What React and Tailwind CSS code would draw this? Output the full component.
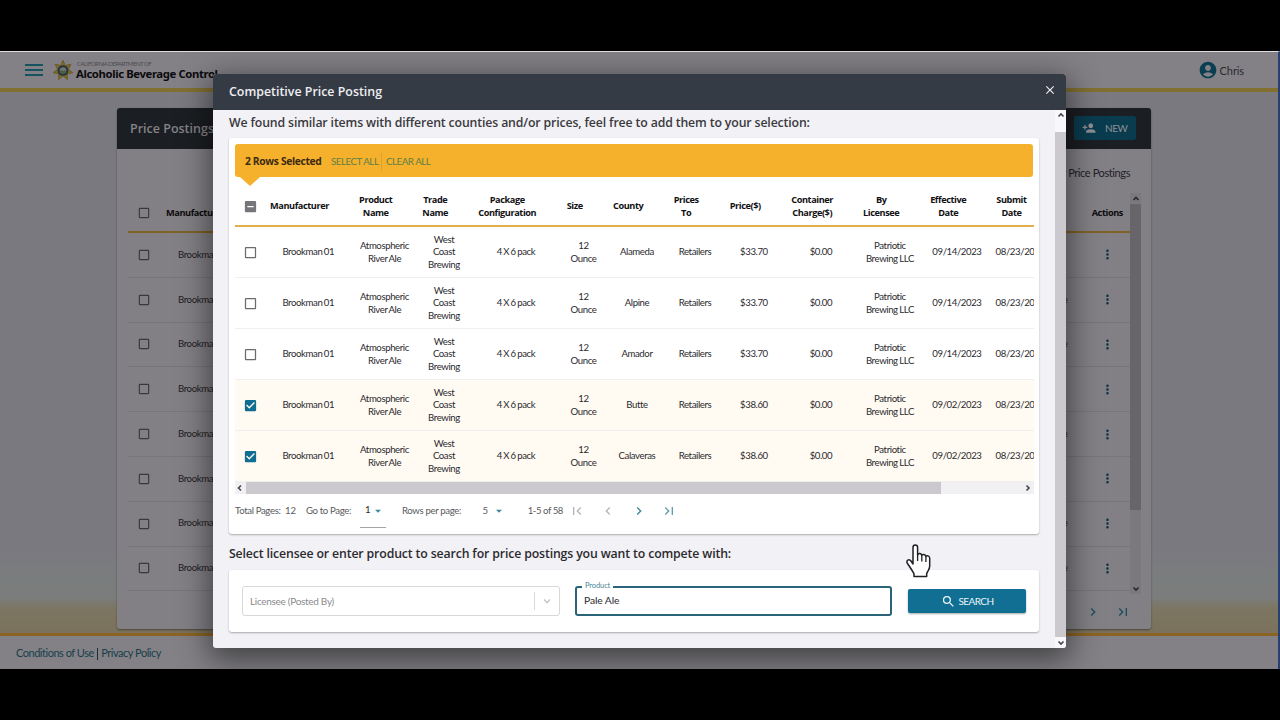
import { MdPersonAddAlt1, MdAccountCircle, MdMoreVert, MdSearch, MdClose, MdChevronLeft, MdChevronRight, MdFirstPage, MdLastPage, MdArrowDropDown, MdCheckBox, MdCheckBoxOutlineBlank, MdIndeterminateCheckBox } from 'react-icons/md';

const columns = [
  { key: 'manufacturer', lines: ['Manufacturer'] },
  { key: 'product', lines: ['Product', 'Name'] },
  { key: 'trade', lines: ['Trade', 'Name'] },
  { key: 'pack', lines: ['Package', 'Configuration'] },
  { key: 'size', lines: ['Size'] },
  { key: 'county', lines: ['County'] },
  { key: 'pricesTo', lines: ['Prices', 'To'] },
  { key: 'price', lines: ['Price($)'] },
  { key: 'container', lines: ['Container', 'Charge($)'] },
  { key: 'licensee', lines: ['By', 'Licensee'] },
  { key: 'effective', lines: ['Effective', 'Date'] },
  { key: 'submit', lines: ['Submit', 'Date'] },
];

const makeRow = (county, price, effective, selected) => ({
  selected,
  manufacturer: ['Brookman 01'],
  product: ['Atmospheric', 'River Ale'],
  trade: ['West', 'Coast', 'Brewing'],
  pack: ['4 X 6 pack'],
  size: ['12', 'Ounce'],
  county: [county],
  pricesTo: ['Retailers'],
  price: [price],
  container: ['$0.00'],
  licensee: ['Patriotic', 'Brewing LLC'],
  effective: [effective],
  submit: ['08/23/2023'],
});

const rows = [
  makeRow('Alameda', '$33.70', '09/14/2023', false),
  makeRow('Alpine', '$33.70', '09/14/2023', false),
  makeRow('Amador', '$33.70', '09/14/2023', false),
  makeRow('Butte', '$38.60', '09/02/2023', true),
  makeRow('Calaveras', '$38.60', '09/02/2023', true),
];

const postingStatuses = ['', 'Active', 'Active', '', 'Active', '', 'Active', 'Active'];

const gridCols =
  'grid w-[817px] grid-cols-[31px_84.6px_67.8px_51.2px_92.8px_42.2px_64.8px_51.2px_66.8px_67.2px_70.8px_63.2px_63.4px]';

function Lines({ lines }) {
  return lines.map((line) => (
    <div key={line} className="whitespace-nowrap">
      {line}
    </div>
  ));
}

function Arrow({ d, className }) {
  return (
    <svg viewBox="0 0 8 8" className={className} fill="none" stroke="currentColor" strokeWidth="1.6">
      <path d={d} />
    </svg>
  );
}

function Badge() {
  return (
    <svg viewBox="-12 -12 24 24" className="ml-[9px] h-[23px] w-[22px]">
      <path
        d="M0-11L2.600-5.400 8.600-6.900 5.850-1.300 10.700 2.400 4.700 3.750 4.800 9.900 0 6 -4.800 9.900 -4.700 3.750 -10.700 2.400 -5.850-1.300 -8.600-6.900 -2.600-5.400z"
        fill="#7d6a2b"
        stroke="#6a5925"
        strokeWidth="1"
        strokeLinejoin="round"
      />
      <circle r="6" fill="#22343b" stroke="#6f6133" strokeWidth="0.6" />
      <circle r="3.6" fill="#6f767a" />
      <path d="M-3.400 1l2-1.600L.4.8 2-.2l1.400 1.400A3.600 3.600 0 01-3.400 1z" fill="#4d5c3c" />
    </svg>
  );
}

function Header() {
  return (
    <header className="flex h-[40px] shrink-0 items-center border-b-4 border-[#817032] bg-[#838186] shadow-[0_1px_4px_rgba(0,0,0,0.35)]">
      <div className="ml-[25px] flex w-[18px] flex-col gap-[3px]">
        <span className="h-[1.8px] bg-[#14535f]" />
        <span className="h-[1.8px] bg-[#14535f]" />
        <span className="h-[1.8px] bg-[#14535f]" />
      </div>
      <Badge />
      <div className="ml-[2px] whitespace-nowrap">
        <div className="pl-[1px] text-[6px] leading-[7px] tracking-[-0.48px] text-[#4e4c50]">CALIFORNIA DEPARTMENT OF</div>
        <div className="font-['Noto_Sans',sans-serif] text-[11.3px] font-bold leading-[14px] tracking-[-0.38px] text-[#0b0b0d]">
          Alcoholic Beverage Control
        </div>
      </div>
      <div className="ml-auto mr-[34px] flex items-center gap-[2px]">
        <MdAccountCircle className="h-[20px] w-[20px] text-[#093f50]" />
        <span className="pt-[2px] text-[11px] leading-[14px] tracking-[-0.1px] text-[#2b2a2e]">Chris</span>
      </div>
    </header>
  );
}

function PostingsCard() {
  return (
    <section className="flex h-[521px] w-[1034px] flex-col rounded-[3px] bg-[#828085] shadow-[0_1px_2px_rgba(0,0,0,0.4)]">
      <div className="flex h-[41px] shrink-0 items-center justify-between rounded-t-[3px] bg-[#1b1e22] pl-[13px] pr-[15px]">
        <h1 className="pt-[1px] font-['Open_Sans',sans-serif] text-[12.5px] font-semibold text-[#858387]">Price Postings</h1>
        <button className="mb-[1px] flex h-[24px] w-[62px] items-center rounded-[2px] bg-[#0a3c4f] pl-[8px] text-[10px] text-[#8f9094]">
          <MdPersonAddAlt1 className="h-[14px] w-[14px] -scale-x-100" />
          <span className="ml-[9px] tracking-[-0.4px]">NEW</span>
        </button>
      </div>
      <div className="flex h-[44px] shrink-0 items-end justify-end pb-[11px] pr-[21px] text-[11px] leading-[18px] tracking-[-0.4px] text-[#232225]">
        My Price Postings
      </div>
      <div className="flex h-[401px] shrink-0 pl-[11px] pr-[10px]">
        <div className="flex-1">
          <div className="flex h-[40px] items-center border-b-2 border-[#806224] pt-[1px] font-['Open_Sans',sans-serif] text-[9.2px] font-bold tracking-[-0.4px] text-[#0c0b0e]">
            <MdCheckBoxOutlineBlank className="ml-[9px] h-[14px] w-[14px] text-[#39383b]" />
            <span className="ml-[15px]">Manufacturer</span>
            <span className="ml-auto mr-[7px]">Actions</span>
          </div>
          {postingStatuses.map((status, i) => (
            <div
              key={i}
              className="flex h-[44.8px] items-center border-b border-[#77757a] text-[9.6px] tracking-[-0.4px] text-[#1d1c20]"
            >
              <MdCheckBoxOutlineBlank className="ml-[9px] h-[14px] w-[14px] text-[#39383b]" />
              <span className="ml-[27px]">Brookman 01</span>
              <span className="ml-auto mr-[32px]">{status}</span>
              <MdMoreVert className="mr-[15.5px] h-[15px] w-[15px] text-[#0a3344]" />
            </div>
          ))}
        </div>
        <div className="flex w-[11px] flex-col items-center bg-[#7b797e] text-[#28272a]">
          <Arrow d="M1.5 5.5L4 3l2.5 2.5" className="my-[1px] h-[9px] w-[8px]" />
          <div className="h-[306px] w-full bg-[#67656a]" />
          <Arrow d="M1.5 3L4 5.5 6.5 3" className="mb-[1px] mt-auto h-[9px] w-[8px]" />
        </div>
      </div>
      <div className="flex flex-1 items-center justify-end gap-[14.5px] pr-[20px] text-[#1b4d5c]">
        <MdChevronRight className="h-[16px] w-[16px]" />
        <MdLastPage className="h-[16px] w-[16px]" />
      </div>
    </section>
  );
}

function ResultsTable() {
  return (
    <div className="w-[799px] overflow-hidden">
      <div className={`${gridCols} h-[50px] items-center border-b-2 border-[#e0b04f] pt-[11px]`}>
        <MdIndeterminateCheckBox className="h-[15px] w-[15px] justify-self-center text-[#767579]" />
        {columns.map((col) => (
          <div
            key={col.key}
            className="flex flex-col items-center pr-[17.5px] font-['Open_Sans',sans-serif] text-[9.2px] font-bold leading-[12.8px] tracking-[-0.42px] text-[#111114]"
          >
            <Lines lines={col.lines} />
          </div>
        ))}
      </div>
      {rows.map((row) => (
        <div
          key={row.county[0]}
          className={`${gridCols} h-[51px] items-center border-b border-[#f1efee] ${row.selected ? 'bg-[#fffaf2]' : 'bg-white'}`}
        >
          {row.selected ? (
            <MdCheckBox className="h-[15px] w-[15px] justify-self-center text-[#0f6d91]" />
          ) : (
            <MdCheckBoxOutlineBlank className="h-[15px] w-[15px] justify-self-center text-[#6b6b6e]" />
          )}
          {columns.map((col) => (
            <div
              key={col.key}
              className="flex flex-col items-center pt-[1px] text-[9.6px] leading-[12.5px] tracking-[-0.4px] [word-spacing:-0.6px] text-[#2b2a2e]"
            >
              <Lines lines={row[col.key]} />
            </div>
          ))}
        </div>
      ))}
    </div>
  );
}

function Pagination() {
  return (
    <div className="flex h-[34px] items-center whitespace-nowrap text-[9.6px] tracking-[-0.35px] text-[#5b5a5e]">
      <span className="w-[50px] pt-[1px]">Total Pages:</span>
      <span className="w-[21px] pt-[1px] tracking-[-0.1px]">12</span>
      <span className="w-[54px] pt-[1px]">Go to Page:</span>
      <span className="flex h-[34px] w-[26px] items-center border-b border-[#a5a4a8] pl-[5px] text-[#2b2a2e]">
        1
        <MdArrowDropDown className="ml-[1px] h-[14px] w-[14px] text-[#3b8797]" />
      </span>
      <span className="ml-[16px] w-[80.5px] pt-[1px]">Rows per page:</span>
      <span>5</span>
      <MdArrowDropDown className="ml-[4px] h-[14px] w-[14px] text-[#3b8797]" />
      <span className="ml-[22px] w-[41.5px] pt-[1px] tracking-[-0.45px]">1-5 of 58</span>
      <MdFirstPage className="h-[16px] w-[16px] text-[#b4b3b7]" />
      <MdChevronLeft className="ml-[15px] h-[16px] w-[16px] text-[#b4b3b7]" />
      <MdChevronRight className="ml-[15px] h-[16px] w-[16px] text-[#3b8797]" />
      <MdLastPage className="ml-[14px] h-[16px] w-[16px] text-[#5f9dab]" />
    </div>
  );
}

function SearchCard() {
  return (
    <div className="flex h-[62px] w-[810px] items-center rounded-[3px] bg-white pl-[13px] shadow-[0_1px_2px_rgba(0,0,0,0.3)]">
      <div className="flex h-[30px] w-[318px] items-center rounded-[3px] border border-[#d8d7da] pl-[7px] text-[10px] tracking-[-0.3px] text-[#8b8a8e]">
        <span>Licensee (Posted By)</span>
        <span className="ml-auto h-[18px] w-px bg-[#dad9dc]" />
        <Arrow d="M1 2.5L4 5.5 7 2.5" className="mx-[8px] h-[8px] w-[8px] text-[#c9c8cb]" />
      </div>
      <div className="relative ml-[15px] flex h-[30px] w-[317px] items-center rounded-[3px] border-2 border-[#2b6479] pl-[7px] text-[10.3px] tracking-[-0.1px] text-[#2b2a2e]">
        <span className="absolute -top-[7px] left-[5px] bg-white px-[3px] text-[7.5px] leading-[10px] text-[#4a8598]">Product</span>
        Pale Ale
      </div>
      <button className="ml-[16px] flex h-[24px] w-[118px] items-center justify-center gap-[3px] rounded-[2px] bg-[#106f93] text-[10px] tracking-[-0.6px] text-[#eaf5f8] shadow-[0_1px_2px_rgba(0,0,0,0.35)]">
        <MdSearch className="h-[15px] w-[15px]" />
        <span className="pt-[1px]">SEARCH</span>
      </button>
    </div>
  );
}

function PriceDialog() {
  return (
    <div className="absolute left-[213px] top-[22px] flex h-[574px] w-[853px] flex-col overflow-hidden rounded-[3px] bg-[#f2f1f5] shadow-[0_8px_30px_4px_rgba(0,0,0,0.5)]">
      <div className="flex h-[36px] shrink-0 items-center justify-between bg-[#353b45] pl-[16px] pr-[9px] text-[#eeeef2]">
        <h2 className="pt-[1px] font-['Open_Sans',sans-serif] text-[12.4px] font-semibold">Competitive Price Posting</h2>
        <MdClose className="mb-[4px] h-[14px] w-[14px]" />
      </div>
      <div className="flex flex-1 justify-between pl-[16px]">
        <div>
          <h3 className="h-[28px] whitespace-nowrap pt-[4px] font-['Open_Sans',sans-serif] text-[12.3px] font-semibold leading-[18px] tracking-[-0.14px] text-[#3a393e]">
            We found similar items with different counties and/or prices, feel free to add them to your selection:
          </h3>
          <div className="h-[396px] w-[810px] rounded-[3px] bg-white pl-[6px] pt-[6px] shadow-[0_1px_2px_rgba(0,0,0,0.3)]">
            <div className="relative flex h-[33px] w-[798px] items-center whitespace-nowrap rounded-[3px] bg-[#f5b02c] pl-[10px] pt-[2px] text-[9.8px] tracking-[-0.5px] text-[#5e8045]">
              <span className="w-[86px] font-['Open_Sans',sans-serif] text-[10.3px] font-bold tracking-[-0.35px] text-[#3c2b10]">
                2 Rows Selected
              </span>
              <span className="w-[50px]">SELECT ALL</span>
              <span className="mr-[4px] h-[18px] w-px bg-[#d9a136]" />
              <span>CLEAR ALL</span>
              <span className="absolute left-[5px] top-full border-x-[10px] border-t-[9px] border-x-transparent border-t-[#f5b02c]" />
            </div>
            <ResultsTable />
            <div className="flex h-[12px] w-[799px] items-center bg-[#f1f0f3] text-[#464549]">
              <Arrow d="M5.5 1.5L3 4l2.5 2.5" className="mr-[2px] h-[8px] w-[9px]" />
              <div className="h-full w-[695px] bg-[#cbc9cd]" />
              <Arrow d="M3 1.5L5.5 4 3 6.5" className="ml-auto mr-[2px] h-[8px] w-[9px]" />
            </div>
            <Pagination />
          </div>
          <h3 className="flex h-[36px] items-center whitespace-nowrap pt-[5px] font-['Open_Sans',sans-serif] text-[12.3px] font-semibold tracking-[-0.14px] text-[#2b2a2f]">
            Select licensee or enter product to search for price postings you want to compete with:
          </h3>
          <SearchCard />
        </div>
        <div className="flex w-[11px] flex-col items-center bg-[#f8f7fa] text-[#464549]">
          <Arrow d="M1.5 5.5L4 3l2.5 2.5" className="mb-[13px] mt-[1px] h-[8px] w-[8px]" />
          <div className="w-full flex-1 bg-[#cbc9cd]" />
          <Arrow d="M1.5 3L4 5.5 6.5 3" className="my-[1px] h-[9px] w-[8px]" />
        </div>
      </div>
    </div>
  );
}

function HandCursor() {
  return (
    <svg viewBox="0 0 26 34" className="absolute left-[905px] top-[492px] h-[34px] w-[26px]">
      <path
        d="M8 20V3.5C8 .3 12.6.3 12.6 3.5V11c.6-2 4-2 4.200.6.6-1.800 3.900-1.500 4.100 1 .8-1.500 3.800-1 3.800 1.700V22c0 3.500-2.400 5.500-3 7.500V32.500H9V30c-1-2.500-3.500-6-6.500-10.500-2-3 1.500-5 3.500-2.500z"
        fill="white"
        stroke="#202024"
        strokeWidth="1.5"
        strokeLinejoin="round"
      />
      <path d="M12.600 11v6M16.800 12v5.500M20.900 13v5" stroke="#202024" strokeWidth="1.300" />
    </svg>
  );
}

export default function App() {
  return (
    <div className="h-[720px] w-[1280px] overflow-hidden bg-black py-[51px] font-['Lato',sans-serif]">
      <div className="relative flex h-[618px] flex-col overflow-hidden border-r-2 border-t border-r-[#27406f] border-t-[#dddce0] bg-[#838186]">
        <Header />
        <main className="flex-1 bg-[linear-gradient(to_bottom,#7a7980_0%,#7a7980_84%,#7a7d7d_90%,#7a7d7b_93.500%,#7c7561_95.500%,#7a725c_100%)] pl-[117px] pt-[16px]">
          <PostingsCard />
        </main>
        <footer className="flex h-[36px] shrink-0 items-center border-t-[3px] border-[#8b6424] bg-[#838186] pl-[16px] pt-[2px] text-[11px] tracking-[-0.48px] text-[#173f4a]">
          <span>Conditions of Use</span>
          <span className="mx-[3px] h-[12px] w-[1.5px] bg-[#1d2c33]" />
          <span>Privacy Policy</span>
        </footer>
        <PriceDialog />
        <HandCursor />
      </div>
    </div>
  );
}
